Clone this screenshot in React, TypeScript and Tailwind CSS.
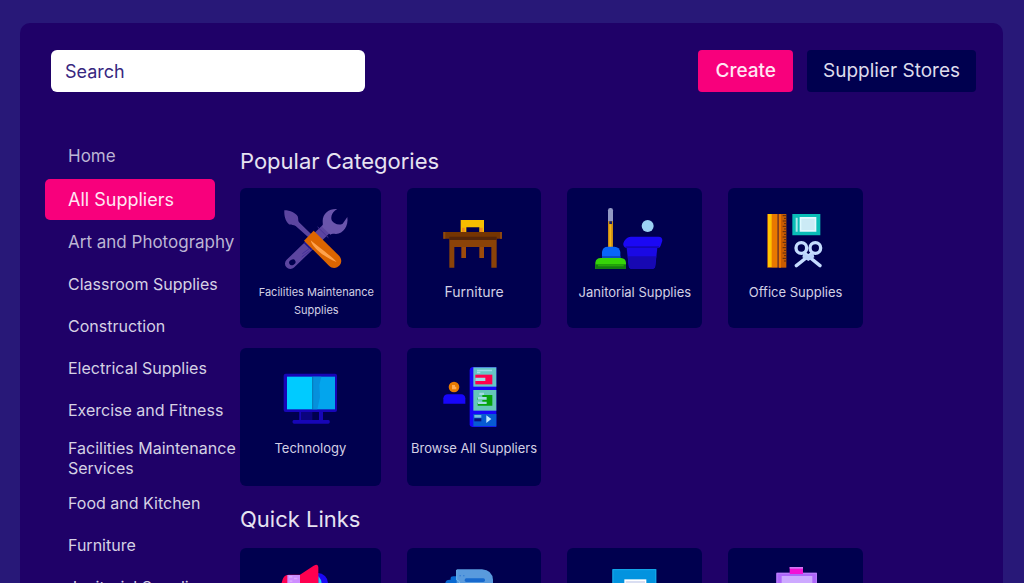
import type { ReactNode } from "react";
import clsx from "clsx";

type NavItem = { label: string; active?: boolean; muted?: boolean; tall?: boolean };

const navItems: NavItem[] = [
  { label: "Home", muted: true },
  { label: "All Suppliers", active: true },
  { label: "Art and Photography", muted: true },
  { label: "Classroom Supplies" },
  { label: "Construction" },
  { label: "Electrical Supplies" },
  { label: "Exercise and Fitness" },
  { label: "Facilities Maintenance Services", tall: true },
  { label: "Food and Kitchen" },
  { label: "Furniture" },
  { label: "Janitorial Supplies" },
];

function Icon({ viewBox, children }: { viewBox: string; children: ReactNode }) {
  return (
    <svg viewBox={viewBox} className="h-[68px] w-24 shrink-0" aria-hidden="true">
      {children}
    </svg>
  );
}

const ToolsIcon = () => (
  <Icon viewBox="65 57 288 204">
    <path d="M262 128 150 236" stroke="#5c45a0" strokeWidth="32" strokeLinecap="round" />
    <path
      d="M291 72C268 70 247 84 247 108C247 115 249 121 245 125L270 149C275 145 280 147 287 147C309 146 325 123 321 96L307 116C296 122 280 117 274 106C270 94 277 79 291 72Z"
      fill="#6a55ac"
    />
    <path d="m232 126 32 32" stroke="#4b3394" strokeWidth="3" />
    <ellipse cx="156" cy="232" rx="10" ry="8" fill="#00004f" transform="rotate(-30 156 232)" />
    <path d="M132 76C150 76 166 84 172 94C175 101 172 107 176 112L213 148L204 157L166 123C160 119 153 122 146 118C135 109 131 92 132 76Z" fill="#5c45a0" />
    <path d="m192 172 22 22" stroke="#1c1590" strokeWidth="5" />
    <path d="m186 206 22-16m-24 26 24-18" stroke="#43309a" strokeWidth="3" />
    <path d="M220 137 191 167 266 242C276 252 290 250 298 241C305 232 304 222 297 213Z" fill="#dc6500" />
    <path d="M211 166C216 190 255 218 289 231C271 211 232 185 211 166Z" fill="#ffa24c" />
  </Icon>
);

const DeskIcon = () => (
  <Icon viewBox="77 57 288 204">
    <path d="M181 105h70v36h-14v-14h-39v14h-17Z" fill="#f7be00" />
    <path d="M185 128h8v13h-8zM239 128h8v13h-8z" fill="#f08a20" />
    <path d="M183 180h14v39h-14zM237 180h14v39h-14z" fill="#9d4b0b" />
    <path d="M147 155h142v93h-16v-62H162v62h-15Z" fill="#8b4308" />
    <path d="M129 141h176v20H129Z" fill="#753502" />
    <path d="M147 155h142v10H147Z" fill="#532409" />
    <path d="M129 141h6v20h-6zM299 141h6v20h-6z" fill="#8c4710" />
  </Icon>
);

const CleaningIcon = () => (
  <Icon viewBox="80 57 288 204">
    <rect x="143" y="69" width="15" height="46" rx="7" fill="#9299c4" />
    <path d="M143 109h15v78h-15z" fill="#c98b13" />
    <path d="M147 118h6v68h-6z" fill="#f5b51b" />
    <path d="M147 109h8v8h-8z" fill="#182070" />
    <path d="M125 219v-18q2-16 18-16h19q16 1 18 16v18Z" fill="#0865fa" />
    <path d="M125 213h55v6h-55z" fill="#064bc5" />
    <path d="M105 252v-19q2-14 16-14h61q14 1 15 14v19Z" fill="#36d409" />
    <path d="M105 238h92v14h-92z" fill="#137b12" />
    <path d="M113 238h77v6h-77z" fill="#25a50a" />
    <circle cx="262" cy="123" r="18" fill="#9bd1f4" />
    <path d="M198 180h94l-7 63q-1 9-11 9h-58q-10 0-11-9Z" fill="#1a09e4" />
    <path d="M202 214h86l-4 29q-1 9-10 9h-58q-9 0-10-9Z" fill="#1708b2" />
    <path d="M212 155h83q11 0 11 12l-5 15q-2 7-9 7h-92q-8 0-11-9c-2-10 10-25 23-25Z" fill="#1b08f4" />
    <path d="M196 184h100v5h-100z" fill="#1406b8" />
  </Icon>
);

const OfficeIcon = () => (
  <Icon viewBox="83 57 288 204">
    <path d="M141 87h31v161h-31z" fill="#e97800" />
    <path d="M143 87h11v159h-11z" fill="#ffc400" />
    <path d="M174 87h24v161h-24z" fill="#c95b00" />
    <path d="M176 87h6v161h-6z" fill="#eb7500" />
    <path
      d="M187 92h11m-7 8h7m-11 8h11m-7 8h7m-11 8h11m-7 8h7m-11 8h11m-7 8h7m-11 8h11m-7 8h7m-11 8h11m-7 8h7m-11 8h11m-7 8h7m-11 8h11m-7 8h7m-11 8h11m-7 8h7"
      stroke="#5a2b10"
      strokeWidth="3"
    />
    <path d="M216 87h84v64h-84z" fill="#09bdb7" />
    <path d="M226 98h6v42h-6z" fill="#a7e8e8" />
    <path d="M238 96h50v44h-50z" fill="#e2f9ff" />
    <path d="M243 101h40v34h-40z" fill="#cbeaf5" />
    <g fill="none" stroke="#c5dcff" strokeWidth="10" strokeLinecap="round">
      <circle cx="243" cy="189" r="16" />
      <circle cx="285" cy="189" r="16" />
      <path d="M252 204 299 242M276 204 228 242" />
    </g>
    <path d="m249 204 15 8 15-8 3 13-18 11-18-11Z" fill="#b9d2fa" />
  </Icon>
);

const MonitorIcon = () => (
  <Icon viewBox="80 60 288 204">
    <rect x="145" y="101" width="160" height="115" rx="6" fill="#1706b7" />
    <path d="M155 110h77v98h-77z" fill="#00cbff" />
    <path d="M232 110h67v98h-67z" fill="#03a5ed" />
    <path d="M232 110h26l-6 25 2 36-8 37h-14Z" fill="#0690dc" />
    <path d="M232 110v98" stroke="#096fa0" strokeWidth="2" />
    <path d="M192 216h39v25h-39z" fill="#0b037e" />
    <path d="M192 216h5v25h-5zM251 216h12v25h-12z" fill="#1706b7" />
    <rect x="172" y="240" width="111" height="11" rx="4" fill="#1706b7" />
  </Icon>
);

const BrowseIcon = () => (
  <Icon viewBox="77 60 288 204">
    <circle cx="161" cy="141" r="16" fill="#e77a00" />
    <path d="M155 135h9v5h4v8h-13Z" fill="#ffab53" />
    <path d="M129 191v-16q2-12 13-12h41q11 1 12 12v16Z" fill="#1806fa" />
    <path d="M219 81h-3q-8 2-8 9v165q1 5 8 6h72V81Z" fill="#1806fa" />
    <path d="M219 82h69v58h-69z" fill="#65c6c6" />
    <path d="M225 104h51v29h-51z" fill="#ff004f" />
    <path d="M225 113h30v10h-30zM230 89h45v5h-45zM230 95h10v5h-10z" fill="#9cdce7" />
    <path d="M219 150h69v62h-69z" fill="#65c6b9" />
    <path d="M232 173h14v-8h30v32h-44v-8h14v-9h-14Z" fill="#06a30a" />
    <path d="M233 171h26v8h-26zM233 185h26v7h-26zM237 158h14v7h-14z" fill="#a0dce2" />
    <path d="M219 222h69v37h-69z" fill="#075bd2" />
    <path d="M222 225h21v8h-21z" fill="#75bddd" />
    <path d="M222 235h21v9h-21z" fill="#07117c" />
    <path d="m258 226 15 11-15 12Z" fill="#c0eaff" />
  </Icon>
);

const MegaphoneIcon = () => (
  <Icon viewBox="95 222 288 204">
    <circle cx="262" cy="280" r="31" fill="#1c08f5" />
    <path d="M264 258v44q14-10 8-32Z" fill="#28c8f5" />
    <path d="M153 285q3-31 22-31h34l41-27q14-8 14 5v107l-55-27h-34q-19 0-22-27Z" fill="#ff004f" />
    <path d="M171 255h38v58h-38z" fill="#ce8dff" />
    <path d="M176 258h10v5h-10zM191 263h10v5h-10zM178 271h8v5h-8z" fill="#daa7ff" />
    <path d="M176 312h29l13 52h-24Z" fill="#b56cf0" />
  </Icon>
);

const PapersIcon = () => (
  <Icon viewBox="587 222 288 204">
    <path d="M645 279q1-11 16-10-2-10 8-10h11v95h-35Z" fill="#0869d2" />
    <path d="M679 238h76q31 2 33 32v114H679Z" fill="#599add" />
    <path d="M679 240v30q10 2 10 12" stroke="#6eb9f1" strokeWidth="3" fill="none" />
    <rect x="703" y="265" width="61" height="11" rx="5" fill="#1769ce" />
    <rect x="703" y="292" width="61" height="9" rx="4" fill="#1769ce" />
    <path d="M688 256h3v3h-3zM699 256h3v3h-3z" fill="#1769ce" />
  </Icon>
);

const DocumentIcon = () => (
  <Icon viewBox="80 132 288 204">
    <path d="M156 147h132v150H156z" fill="#0293df" />
    <path d="M158 149h128v146H158z" fill="none" stroke="#16a8e9" strokeWidth="3" />
    <path d="M192 178h66v90h-66z" fill="#fff" />
    <path d="M196 183h58v9h-58z" fill="#d9def2" />
  </Icon>
);

const ClipboardIcon = () => (
  <Icon viewBox="563 132 288 204">
    <path d="M648 158h122v142H648z" fill="#ae67fa" />
    <path d="M650 160h118v138H650z" fill="none" stroke="#bd81fc" strokeWidth="3" />
    <path d="M664 168h92v112h-92z" fill="#cda9ff" />
    <path d="M688 141h40v21h-40z" fill="#f313d5" />
    <path d="M688 141h40v5h-40z" fill="#d176f5" />
  </Icon>
);

const categories = [
  { label: "Facilities Maintenance Supplies", icon: <ToolsIcon />, text: "text-[11px] pl-3" },
  { label: "Furniture", icon: <DeskIcon />, text: "text-sm" },
  { label: "Janitorial Supplies", icon: <CleaningIcon />, text: "text-[13px]" },
  { label: "Office Supplies", icon: <OfficeIcon />, text: "text-[13px]" },
  { label: "Technology", icon: <MonitorIcon />, text: "text-[13px]", low: true },
  { label: "Browse All Suppliers", icon: <BrowseIcon />, text: "text-[13px]", low: true },
];

const quickLinks = [
  { name: "Announcements", icon: <MegaphoneIcon /> },
  { name: "Documents", icon: <PapersIcon /> },
  { name: "Forms", icon: <DocumentIcon /> },
  { name: "Orders", icon: <ClipboardIcon /> },
];

const gridClass = "grid grid-cols-[141fr_135fr_135fr_135fr] gap-x-[26px] gap-y-5";
const cardClass = "flex flex-col items-center rounded-md bg-[#00004f]";
const headingClass = "text-[22px] leading-[26px] text-[#e6e3f1]";

export default function App() {
  return (
    <div className="flex h-screen flex-col overflow-hidden bg-[#281878] pt-[23px] pr-[21px] pl-5 font-['Inter',sans-serif]">
      <div className="min-h-0 flex-1 overflow-hidden rounded-t-[10px] bg-[#1f0168] pt-[27px]">
        <header className="flex items-center pr-[27px] pl-[31px]">
          <input
            type="search"
            aria-label="Search"
            placeholder="Search"
            className="h-[42px] w-[314px] rounded-md bg-white px-[14px] text-lg text-[#281878] outline-none placeholder:text-[#37277f] placeholder:opacity-100"
          />
          <button type="button" className="ml-auto h-[42px] rounded bg-[#f8007c] px-[17px] text-[19px] font-medium text-[#ffe6f3]">
            Create
          </button>
          <button type="button" className="ml-[14px] h-[42px] rounded bg-[#00004f] px-4 text-[19px] text-[#dedcec]">
            Supplier Stores
          </button>
        </header>

        <div className="mt-[43px] flex">
          <nav aria-label="Suppliers" className="w-[220px] shrink-0 pl-[25px]">
            <ul className="flex flex-col gap-px">
              {navItems.map((item) => (
                <li key={item.label}>
                  <a
                    href="#"
                    aria-current={item.active ? "page" : undefined}
                    className={clsx(
                      "flex items-center pl-[23px] leading-5",
                      item.tall ? "h-[50px] pt-[3px]" : "h-[41px]",
                      item.active
                        ? "mt-0.5 w-[170px] rounded-[5px] bg-[#f8007c] text-lg text-[#ffe6f3]"
                        : item.muted
                          ? "text-[17px] text-[#bcb5d4]"
                          : "text-base text-[#d5d1e4]",
                    )}
                  >
                    {item.label}
                  </a>
                </li>
              ))}
            </ul>
          </nav>

          <main className="min-w-0 flex-1 pt-[13px] pr-[140px]">
            <h2 className={headingClass}>Popular Categories</h2>
            <div className={clsx(gridClass, "mt-[14px] grid-rows-[140px_138px]")}>
              {categories.map((c) => (
                <a key={c.label} href="#" className={clsx(cardClass, c.low ? "pt-3" : "pt-4")}>
                  {c.icon}
                  <span className={clsx("mt-[11px] text-center leading-[18px] text-[#d3d0e5]", c.text)}>{c.label}</span>
                </a>
              ))}
            </div>
            <h2 className={clsx(headingClass, "mt-5")}>Quick Links</h2>
            <div className={clsx(gridClass, "mt-4 auto-rows-[140px]")}>
              {quickLinks.map((q) => (
                <a key={q.name} href="#" aria-label={q.name} className={clsx(cardClass, "pt-4")}>
                  {q.icon}
                </a>
              ))}
            </div>
          </main>
        </div>
      </div>
    </div>
  );
}
